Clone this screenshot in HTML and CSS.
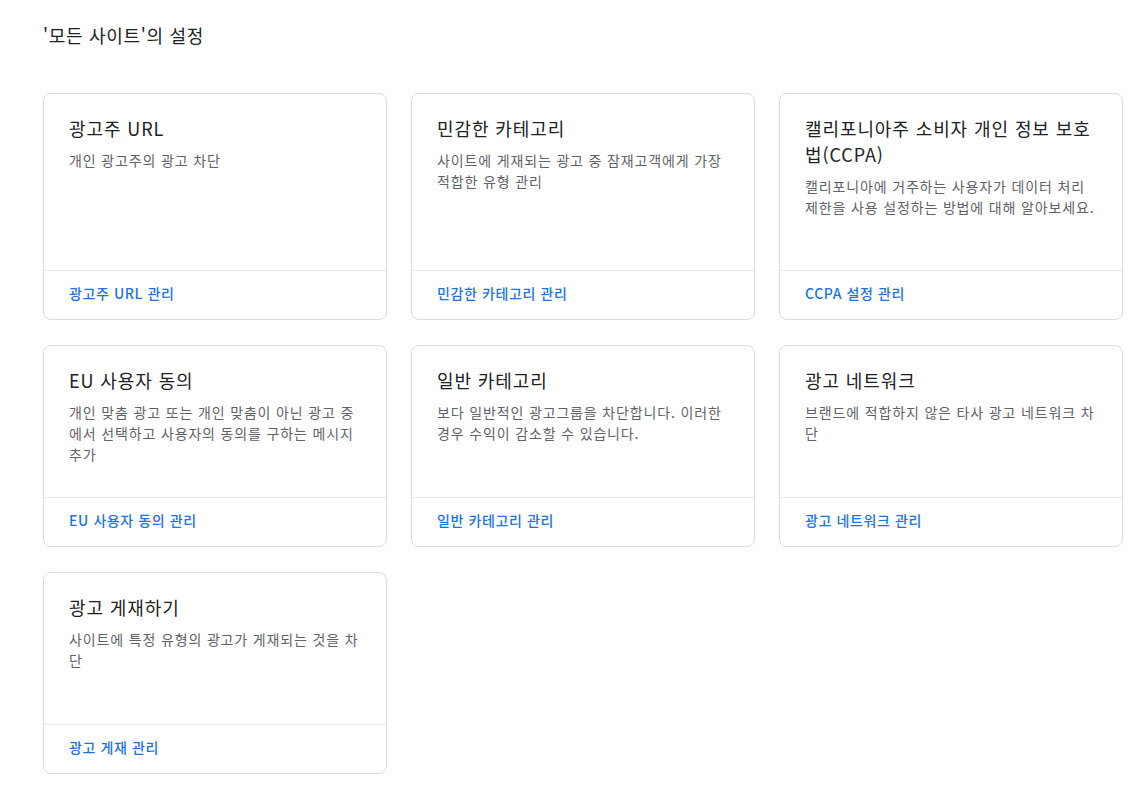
FILE: index.html
```html
<!DOCTYPE html>
<html lang="ko">
<head>
<meta charset="utf-8">
<link rel="stylesheet" href="styles.css">
</head>
<body>
<div class="page">
  <h1 class="page-title">'모든 사이트'의 설정</h1>
  <div class="grid">
    <div class="card">
      <div class="card-body">
        <h2 class="card-title">광고주 URL</h2>
        <p class="card-desc">개인 광고주의 광고 차단</p>
      </div>
      <div class="card-footer"><a class="card-link">광고주 URL 관리</a></div>
    </div>
    <div class="card">
      <div class="card-body">
        <h2 class="card-title">민감한 카테고리</h2>
        <p class="card-desc">사이트에 게재되는 광고 중 잠재고객에게 가장 적합한 유형 관리</p>
      </div>
      <div class="card-footer"><a class="card-link">민감한 카테고리 관리</a></div>
    </div>
    <div class="card">
      <div class="card-body">
        <h2 class="card-title">캘리포니아주 소비자 개인 정보 보호법(CCPA)</h2>
        <p class="card-desc">캘리포니아에 거주하는 사용자가 데이터 처리 제한을 사용 설정하는 방법에 대해 알아보세요.</p>
      </div>
      <div class="card-footer"><a class="card-link">CCPA 설정 관리</a></div>
    </div>
    <div class="card">
      <div class="card-body">
        <h2 class="card-title">EU 사용자 동의</h2>
        <p class="card-desc">개인 맞춤 광고 또는 개인 맞춤이 아닌 광고 중에서 선택하고 사용자의 동의를 구하는 메시지 추가</p>
      </div>
      <div class="card-footer"><a class="card-link">EU 사용자 동의 관리</a></div>
    </div>
    <div class="card">
      <div class="card-body">
        <h2 class="card-title">일반 카테고리</h2>
        <p class="card-desc">보다 일반적인 광고그룹을 차단합니다. 이러한 경우 수익이 감소할 수 있습니다.</p>
      </div>
      <div class="card-footer"><a class="card-link">일반 카테고리 관리</a></div>
    </div>
    <div class="card">
      <div class="card-body">
        <h2 class="card-title">광고 네트워크</h2>
        <p class="card-desc">브랜드에 적합하지 않은 타사 광고 네트워크 차단</p>
      </div>
      <div class="card-footer"><a class="card-link">광고 네트워크 관리</a></div>
    </div>
    <div class="card">
      <div class="card-body">
        <h2 class="card-title">광고 게재하기</h2>
        <p class="card-desc">사이트에 특정 유형의 광고가 게재되는 것을 차단</p>
      </div>
      <div class="card-footer"><a class="card-link">광고 게재 관리</a></div>
    </div>
  </div>
</div>
</body>
</html>
```
FILE: styles.css
```css
html, body {
  margin: 0;
  padding: 0;
  background: #ffffff;
}
body {
  font-family: "Noto Sans CJK KR", "Noto Sans", sans-serif;
  color: #202124;
}
.page {
  padding: 22px 22px 0 43px;
}
.page-title {
  margin: 0;
  font-size: 18px;
  font-weight: 400;
  line-height: 26px;
  letter-spacing: 0.7px;
  color: #202124;
}
.grid {
  margin-top: 45px;
  display: grid;
  grid-template-columns: repeat(3, 344px);
  grid-template-rows: 227px 202px 202px;
  column-gap: 24px;
  row-gap: 25px;
}
.card {
  border: 1px solid #dadce0;
  border-radius: 8px;
  display: flex;
  flex-direction: column;
  box-sizing: border-box;
}
.card-body {
  flex: 1;
  padding: 21px 25px 0 25px;
}
.card-title {
  margin: 0;
  font-size: 18px;
  font-weight: 400;
  line-height: 26px;
  letter-spacing: 0.9px;
  color: #202124;
}
.card-desc {
  margin: 9px 0 0 0;
  font-size: 14px;
  line-height: 21px;
  letter-spacing: 0.85px;
  color: #5f6368;
}
.card-footer {
  height: 49px;
  border-top: 1px solid #e8eaed;
  display: flex;
  align-items: center;
  padding: 0 25px 5px 25px;
  box-sizing: border-box;
}
.card-link {
  font-size: 14px;
  font-weight: 500;
  letter-spacing: 0.6px;
  color: #1a73e8;
  text-decoration: none;
}
```
